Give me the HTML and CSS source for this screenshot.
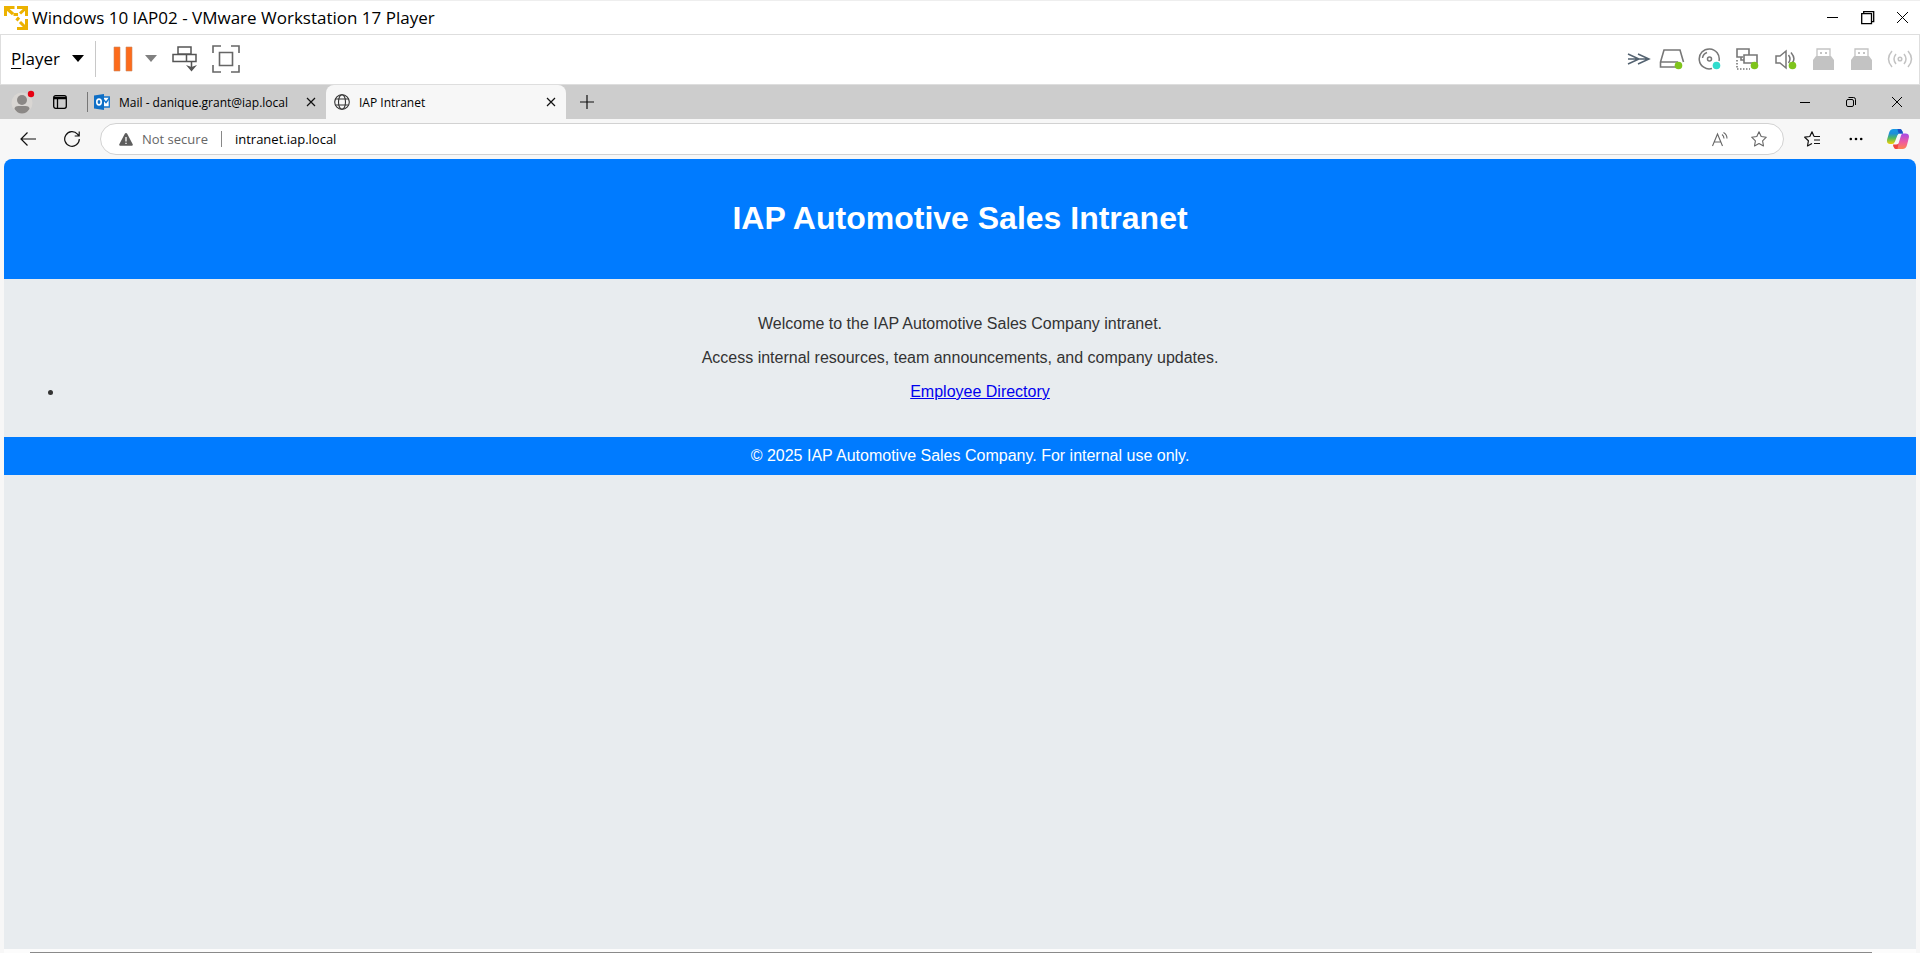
FILE: index.html
```html
<!DOCTYPE html>
<html lang="en">
<head>
<meta charset="utf-8">
<title>Windows 10 IAP02 - VMware Workstation 17 Player</title>
<link rel="stylesheet" href="styles.css">
</head>
<body>
<div class="window">
  <header class="titlebar">
    <svg class="vm-logo" width="24" height="24" viewBox="0 0 24 24" fill="none" stroke="#ecb200" stroke-width="3"><path d="M1.500 10V1.500h9M1.500 1.500L9 8M22.500 10V1.500H13M22.500 1.500L16 7.500M9.500 8.500h4.500M12.500 14.500l2.500-3M22.500 13v9.500H13M22.500 22.500L16 16"/><path fill="#ecb200" stroke="none" d="M0 0h8L0 8zM24 0v8l-8-8zM24 24h-8l8-8z"/></svg>
    <span class="title">Windows 10 IAP02 - VMware Workstation 17 Player</span>
    <div class="caption">
      <button aria-label="Minimize"><svg width="14" height="14" viewBox="0 0 14 14" fill="none" stroke="#000"><path d="M1 6.500h11"/></svg></button>
      <button aria-label="Restore"><svg width="14" height="14" viewBox="0 0 14 14" fill="none" stroke="#000" stroke-width="1.300"><path d="M.7 2.700h9.800v10H.7zM2.700 2.500V.7h10v10h-2"/></svg></button>
      <button aria-label="Close"><svg width="14" height="14" viewBox="0 0 14 14" fill="none" stroke="#000"><path d="M1 1l11 11M12 1L1 12"/></svg></button>
    </div>
  </header>

  <div class="vm-toolbar">
    <button class="player"><span><u>P</u>layer</span><svg width="12" height="7" viewBox="0 0 12 7"><path d="M0 0h12L6 7z"/></svg></button>
    <button class="pause" aria-label="Pause"><svg width="20" height="26" viewBox="0 0 20 26"><path fill="#fd6b1b" stroke="#c98a66" stroke-width=".6" d="M1 1h6v24H1zM13 1h6v24h-6z"/></svg></button>
    <button class="drop" aria-label="Power options"><svg width="12" height="7" viewBox="0 0 12 7"><path fill="#808080" d="M0 0h12L6 7z"/></svg></button>
    <button class="send" aria-label="Send Ctrl+Alt+Del"><svg width="26" height="26" viewBox="0 0 26 26" fill="none" stroke="#555" stroke-width="1.500"><path d="M6 1h13v7H6zM1 8.500h23v7H1zM14.500 8.500v7M19.500 15v9"/><path fill="#555" stroke="none" d="M14 19l5.500 2 5.500-2-5.500 6.500z"/></svg></button>
    <button class="full" aria-label="Full screen"><svg width="28" height="28" viewBox="0 0 28 28" fill="none" stroke="#666" stroke-width="1.600"><path d="M1 8V1h8M19 1h8v7M27 20v7h-8M9 27H1v-7M7.500 7.500h13v13h-13z"/></svg></button>
    <div class="devices">
      <button class="collapse" aria-label="Collapse"><svg width="24" height="12" viewBox="0 0 24 12" fill="none" stroke="#536270" stroke-width="1.500"><path d="M1 1l11 5-11 5M11 1l11 5-11 5M1 6h20"/></svg></button>
      <button aria-label="Hard disk"><svg width="26" height="22" viewBox="0 0 26 22" fill="none" stroke="#777" stroke-width="1.600"><path d="M17 19H1.500v-5L5 2h16l3.500 12M2 14h17"/><circle cx="19.500" cy="17.500" r="3.800" fill="#7fc41c" stroke="none"/></svg></button>
      <button aria-label="CD/DVD"><svg width="26" height="22" viewBox="0 0 26 22" fill="none" stroke="#777" stroke-width="1.500"><path d="M15 20.500A10 10 0 1 1 22 13M5.500 10A7 7 0 0 1 10 4.500"/><circle cx="12.500" cy="11" r="2"/><circle cx="19.500" cy="17.500" r="3.800" fill="#31dccd" stroke="none"/></svg></button>
      <button aria-label="Network adapter"><svg width="26" height="22" viewBox="0 0 26 22" fill="none" stroke="#777" stroke-width="1.600"><path d="M8 9H2V1h12v6M9 7h13v8H9zM6 9v3h3"/><path stroke-dasharray="1.500 1.500" d="M2 12v9h13"/><circle cx="19.500" cy="17.500" r="3.800" fill="#7fc41c" stroke="none"/></svg></button>
      <button aria-label="Sound card"><svg width="26" height="22" viewBox="0 0 26 22" fill="none" stroke="#777" stroke-width="1.500"><path d="M3 8h4l6-5v17l-6-5H3zM15.500 7q3 4 0 8M18 4.500q5 6 1.500 10"/><circle cx="19.500" cy="17.500" r="3.800" fill="#7fc41c" stroke="none"/></svg></button>
      <button aria-label="USB device 1"><svg width="26" height="22" viewBox="0 0 26 22"><path fill="#fff" stroke="#c3c3c3" stroke-width="1.300" d="M6 1h13v8H6z"/><path fill="#c3c3c3" d="M9 4h2v2H9zM14 4h2v2h-2zM5 8h15l3 4v10H2V12z"/></svg></button>
      <button aria-label="USB device 2"><svg width="26" height="22" viewBox="0 0 26 22"><path fill="#fff" stroke="#c3c3c3" stroke-width="1.300" d="M6 1h13v8H6z"/><path fill="#c3c3c3" d="M9 4h2v2H9zM14 4h2v2h-2zM5 8h15l3 4v10H2V12z"/></svg></button>
      <button aria-label="Wireless"><svg width="26" height="22" viewBox="0 0 26 22" fill="none" stroke="#c3c3c3" stroke-width="1.500"><circle cx="13" cy="11" r="1.800"/><path d="M5 3q-7 8 0 16M9 6q-4 5 0 10M21 3q7 8 0 16M17 6q4 5 0 10"/></svg></button>
    </div>
  </div>

  <div class="browser">
    <div class="tabstrip">
      <button class="avatar" aria-label="Profile"><svg width="24" height="24" viewBox="0 0 24 24"><circle cx="11" cy="13" r="10.500" fill="#d9d6d3"/><circle cx="11" cy="10" r="5" fill="#8b8886"/><path fill="#8b8886" d="M3.500 19q0-3 4-3h7q4 0 4 3-3 4.500-7.500 4.500T3.500 19z"/><circle cx="20" cy="4" r="3.200" fill="#e60012"/></svg></button>
      <button class="tab-menu" aria-label="Tab actions"><svg width="14" height="14" viewBox="0 0 14 14" fill="none" stroke="#000" stroke-width="1.300"><rect x=".7" y=".7" width="12.600" height="12.600" rx="2"/><path d="M1 3h12" stroke-width="2.500"/><path d="M4.500 4v9"/></svg></button>
      <div class="tab mail">
        <svg width="16" height="16" viewBox="0 0 16 16"><path fill="#fff" stroke="#1676cc" stroke-width="1.300" d="M8 3h7.300v10H8"/><path fill="none" stroke="#1676cc" stroke-width="1.500" d="M9 5l3 3.500L15.500 4"/><path fill="#0f6fc6" d="M0 1.500L10 0v16L0 14.500z"/><ellipse cx="5" cy="8" rx="2.200" ry="2.900" fill="none" stroke="#fff" stroke-width="1.600"/></svg>
        <span class="tab-name">Mail - danique.grant@iap.local</span>
        <button aria-label="Close tab"><svg width="10" height="10" viewBox="0 0 10 10" stroke="#111" stroke-width="1.200"><path d="M1 1l8 8M9 1L1 9"/></svg></button>
      </div>
      <div class="tab active">
        <svg width="16" height="16" viewBox="0 0 16 16" fill="none" stroke="#333" stroke-width="1.100"><circle cx="8" cy="8" r="7.300"/><ellipse cx="8" cy="8" rx="3.500" ry="7.300"/><path d="M1.500 5h13M1.500 11h13"/></svg>
        <span class="tab-name">IAP Intranet</span>
        <button aria-label="Close tab"><svg width="10" height="10" viewBox="0 0 10 10" stroke="#111" stroke-width="1.200"><path d="M1 1l8 8M9 1L1 9"/></svg></button>
      </div>
      <button class="new-tab" aria-label="New tab"><svg width="14" height="14" viewBox="0 0 14 14" stroke="#111" stroke-width="1.200"><path d="M7 0v14M0 7h14"/></svg></button>
      <div class="browser-caption">
        <button aria-label="Minimize"><svg width="10" height="10" viewBox="0 0 10 10" stroke="#000"><path d="M0 5.500h10"/></svg></button>
        <button aria-label="Restore"><svg width="10" height="10" viewBox="0 0 10 10" fill="none" stroke="#000"><rect x=".5" y="2.500" width="7" height="7" rx="1.500"/><path d="M2.500.5H7.500q2 0 2 2V8"/></svg></button>
        <button aria-label="Close"><svg width="10" height="10" viewBox="0 0 10 10" stroke="#000"><path d="M0 0l10 10M10 0L0 10"/></svg></button>
      </div>
    </div>

    <div class="navbar">
      <button class="nav-icon" aria-label="Back"><svg width="16" height="14" viewBox="0 0 16 14" fill="none" stroke="#111" stroke-width="1.200"><path d="M16 7H1M7.500.5L1 7l6.500 6.500"/></svg></button>
      <button class="nav-icon" aria-label="Refresh"><svg width="16" height="16" viewBox="0 0 16 16" fill="none" stroke="#111" stroke-width="1.200"><path d="M15.300 8A7.300 7.300 0 1 1 13.500 3.200L15 5M15.200.5V5h-4.500"/></svg></button>
      <div class="address">
        <svg width="14" height="13" viewBox="0 0 14 13"><path fill="#5d5d5d" d="M7 0q.8 0 1.200.8l5.500 10.400q.5 1.300-1 1.600H1.300q-1.500-.3-1-1.600L5.800.8Q6.200 0 7 0z"/><path stroke="#fff" stroke-width="1.300" d="M7 4v4.500M7 9.700V11"/></svg>
        <span class="security">Not secure</span>
        <input class="url" type="text" value="intranet.iap.local" aria-label="Address">
        <button class="read" aria-label="Read aloud"><svg width="16" height="15" viewBox="0 0 16 15" fill="none" stroke="#666" stroke-width="1.100"><path d="M.5 14L5.500 2l5 12M2.300 10h6.500M10 2.500q2 1.500 2 4M11.500.5q3.500 2 3.500 6"/></svg></button>
        <button aria-label="Add to favorites"><svg width="16" height="16" viewBox="0 0 16 16" fill="none" stroke="#666" stroke-width="1.100" stroke-linejoin="round"><path d="M8 .8l2.200 4.700 5.100.7-3.700 3.600.9 5.200L8 12.500 3.500 15l.9-5.200L.7 6.200l5.100-.7z"/></svg></button>
      </div>
      <button class="nav-icon" aria-label="Favorites"><svg width="16" height="16" viewBox="0 0 16 16" fill="none" stroke="#111" stroke-width="1.200" stroke-linejoin="round"><path d="M10 5.500L8 .8 5.800 5.500.7 6.200l3.700 3.600L3.500 15 8 12.500M10 5.500h6M10 9h6M10 12.500h6"/></svg></button>
      <button class="nav-icon" aria-label="Settings and more"><svg width="14" height="4" viewBox="0 0 14 4"><circle cx="1.800" cy="2" r="1.300"/><circle cx="7" cy="2" r="1.300"/><circle cx="12.200" cy="2" r="1.300"/></svg></button>
      <button class="copilot" aria-label="Copilot"><svg width="22" height="20" viewBox="0 0 22 20">
        <defs>
          <linearGradient id="cool" x1="0" y1="0" x2="0" y2="1"><stop offset="0" stop-color="#169be8"/><stop offset=".3" stop-color="#1e8fd8"/><stop offset=".6" stop-color="#4fb862"/><stop offset="1" stop-color="#f5d000"/></linearGradient>
          <linearGradient id="warm" x1="0" y1="0" x2="0" y2="1"><stop offset="0" stop-color="#a34be8"/><stop offset=".55" stop-color="#ef5aa0"/><stop offset="1" stop-color="#ff8350"/></linearGradient>
        </defs>
        <path fill="url(#warm)" d="M15 4.500h3.500q4 0 3.400 4L20 16q-1 4-4.500 4H9q-2 0-3-4h3q2 0 2.700-2L14 6.500z"/>
        <path fill="url(#cool)" d="M6.500 0H13q2 0 3 4.500h-3q-2 0-2.700 2L8 12.500Q7 15 5 15H3Q-.6 15 .1 10.500L2 4q1-4 4.500-4z"/>
        <path fill="#1d4fc4" d="M10.500 0H13q2 0 3 4.500h-3q-1.500 0-2-2z"/>
        <path fill="#f0443e" d="M6 15.500h3.500q1.500 0 2-1l-1 5.500H9q-2 0-3-4.500z"/></svg></button>
    </div>

    <div class="viewport">
      <div class="site">
        <div class="site-header"><h1>IAP Automotive Sales Intranet</h1></div>
        <main class="site-main">
          <p>Welcome to the IAP Automotive Sales Company intranet.</p>
          <p>Access internal resources, team announcements, and company updates.</p>
          <ul><li><a href="#directory">Employee Directory</a></li></ul>
        </main>
        <footer class="site-footer">© 2025 IAP Automotive Sales Company. For internal use only.</footer>
      </div>
      <div class="hscroll"></div>
    </div>
  </div>
</div>
</body>
</html>
```
FILE: styles.css
```css
* { box-sizing: border-box; }
body { margin: 0; font-family: "Open Sans", "Noto Sans", sans-serif; color: #000; }
button { display: flex; align-items: center; justify-content: center; padding: 0; border: 0; background: none; font: inherit; color: inherit; }
svg { flex: none; display: block; }

.window { display: flex; flex-direction: column; min-height: 100vh; background: #fff; }

.titlebar { display: flex; align-items: center; height: 35px; padding-left: 4px; border-top: 1px solid #eee; border-bottom: 1px solid #dedede; }
.title { margin-left: 4px; font-size: 17px; line-height: 24px; }
.caption { display: flex; margin-left: auto; }
.caption button { width: 35px; height: 32px; }

.vm-toolbar { display: flex; align-items: center; height: 50px; padding: 0 6px 2px 10px; border: 1px solid #dedede; border-width: 0 1px 1px; }
.player { gap: 12px; height: 36px; padding-right: 11px; border-right: 1px solid #c8c8c8; font-size: 17px; }
.player u { text-underline-offset: 3px; }
.pause { margin-left: 17px; }
.drop { margin-left: 12px; }
.send { margin-left: 15px; }
.full { margin-left: 14px; }
.devices { display: flex; gap: 12px; margin-left: auto; }
.collapse { margin-right: -4px; }

.browser { display: flex; flex: 1; flex-direction: column; background: #f7f7f7; }
.tabstrip { display: flex; align-items: center; height: 34px; background: #cdcdcd; }
.avatar { margin-left: 11px; }
.tab-menu { margin: 0 19px 0 18px; }
.tab { display: flex; align-items: center; width: 240px; height: 34px; padding: 0 10px 0 8px; font-size: 12px; }
.tab-name { flex: 1; margin-left: 9px; white-space: nowrap; }
.mail { position: relative; }
.mail::before { content: ""; position: absolute; left: 1px; top: 7px; width: 1px; height: 20px; background: #777; }
.active { background: #f7f7f7; border-radius: 8px 8px 0 0; }
.new-tab { margin-left: 14px; }
.browser-caption { display: flex; margin-left: auto; }
.browser-caption button { width: 46px; height: 34px; }

.navbar { display: flex; align-items: center; height: 40px; padding: 0 11px 0 6px; }
.nav-icon { width: 44px; height: 32px; }
.copilot { margin-left: 9px; }
.address { display: flex; flex: 1; align-items: center; height: 32px; margin: 0 6px; padding: 0 16px 0 18px; background: #fff; border: 1px solid #d2d2d2; border-radius: 16px; font-size: 13px; }
.security { margin-left: 9px; padding-right: 13px; border-right: 1px solid #888; color: #666; line-height: 16px; }
.url { flex: 1; min-width: 0; margin: 0 0 0 13px; padding: 0; border: 0; outline: 0; background: none; font: inherit; color: #000; }
.read { margin-right: 23px; }

.viewport { display: flex; flex: 1; flex-direction: column; margin: 0 4px; overflow: hidden; border-radius: 8px 8px 0 0; background: #fcfcfc; }
.site { flex: 1; background: #e8ecef; color: #333; font-family: "Liberation Sans", Arial, sans-serif; font-size: 16px; line-height: 18px; text-align: center; }
.site-header { padding: 41px 20px 42px; background: #007bff; color: #fff; }
.site-header h1 { margin: 0; font-size: 32px; line-height: 37px; }
.site-main { padding: 36px 20px; }
.site-main p { margin: 0 0 16px; }
.site-main ul { margin: 0; padding-left: 40px; }
.site-main a { color: #0000ee; }
.site-footer { padding: 10px 0 10px 20px; background: #007bff; color: #fff; }
.hscroll { height: 1px; margin: 3px 44px 0 26px; background: #8a8a8a; }
```
